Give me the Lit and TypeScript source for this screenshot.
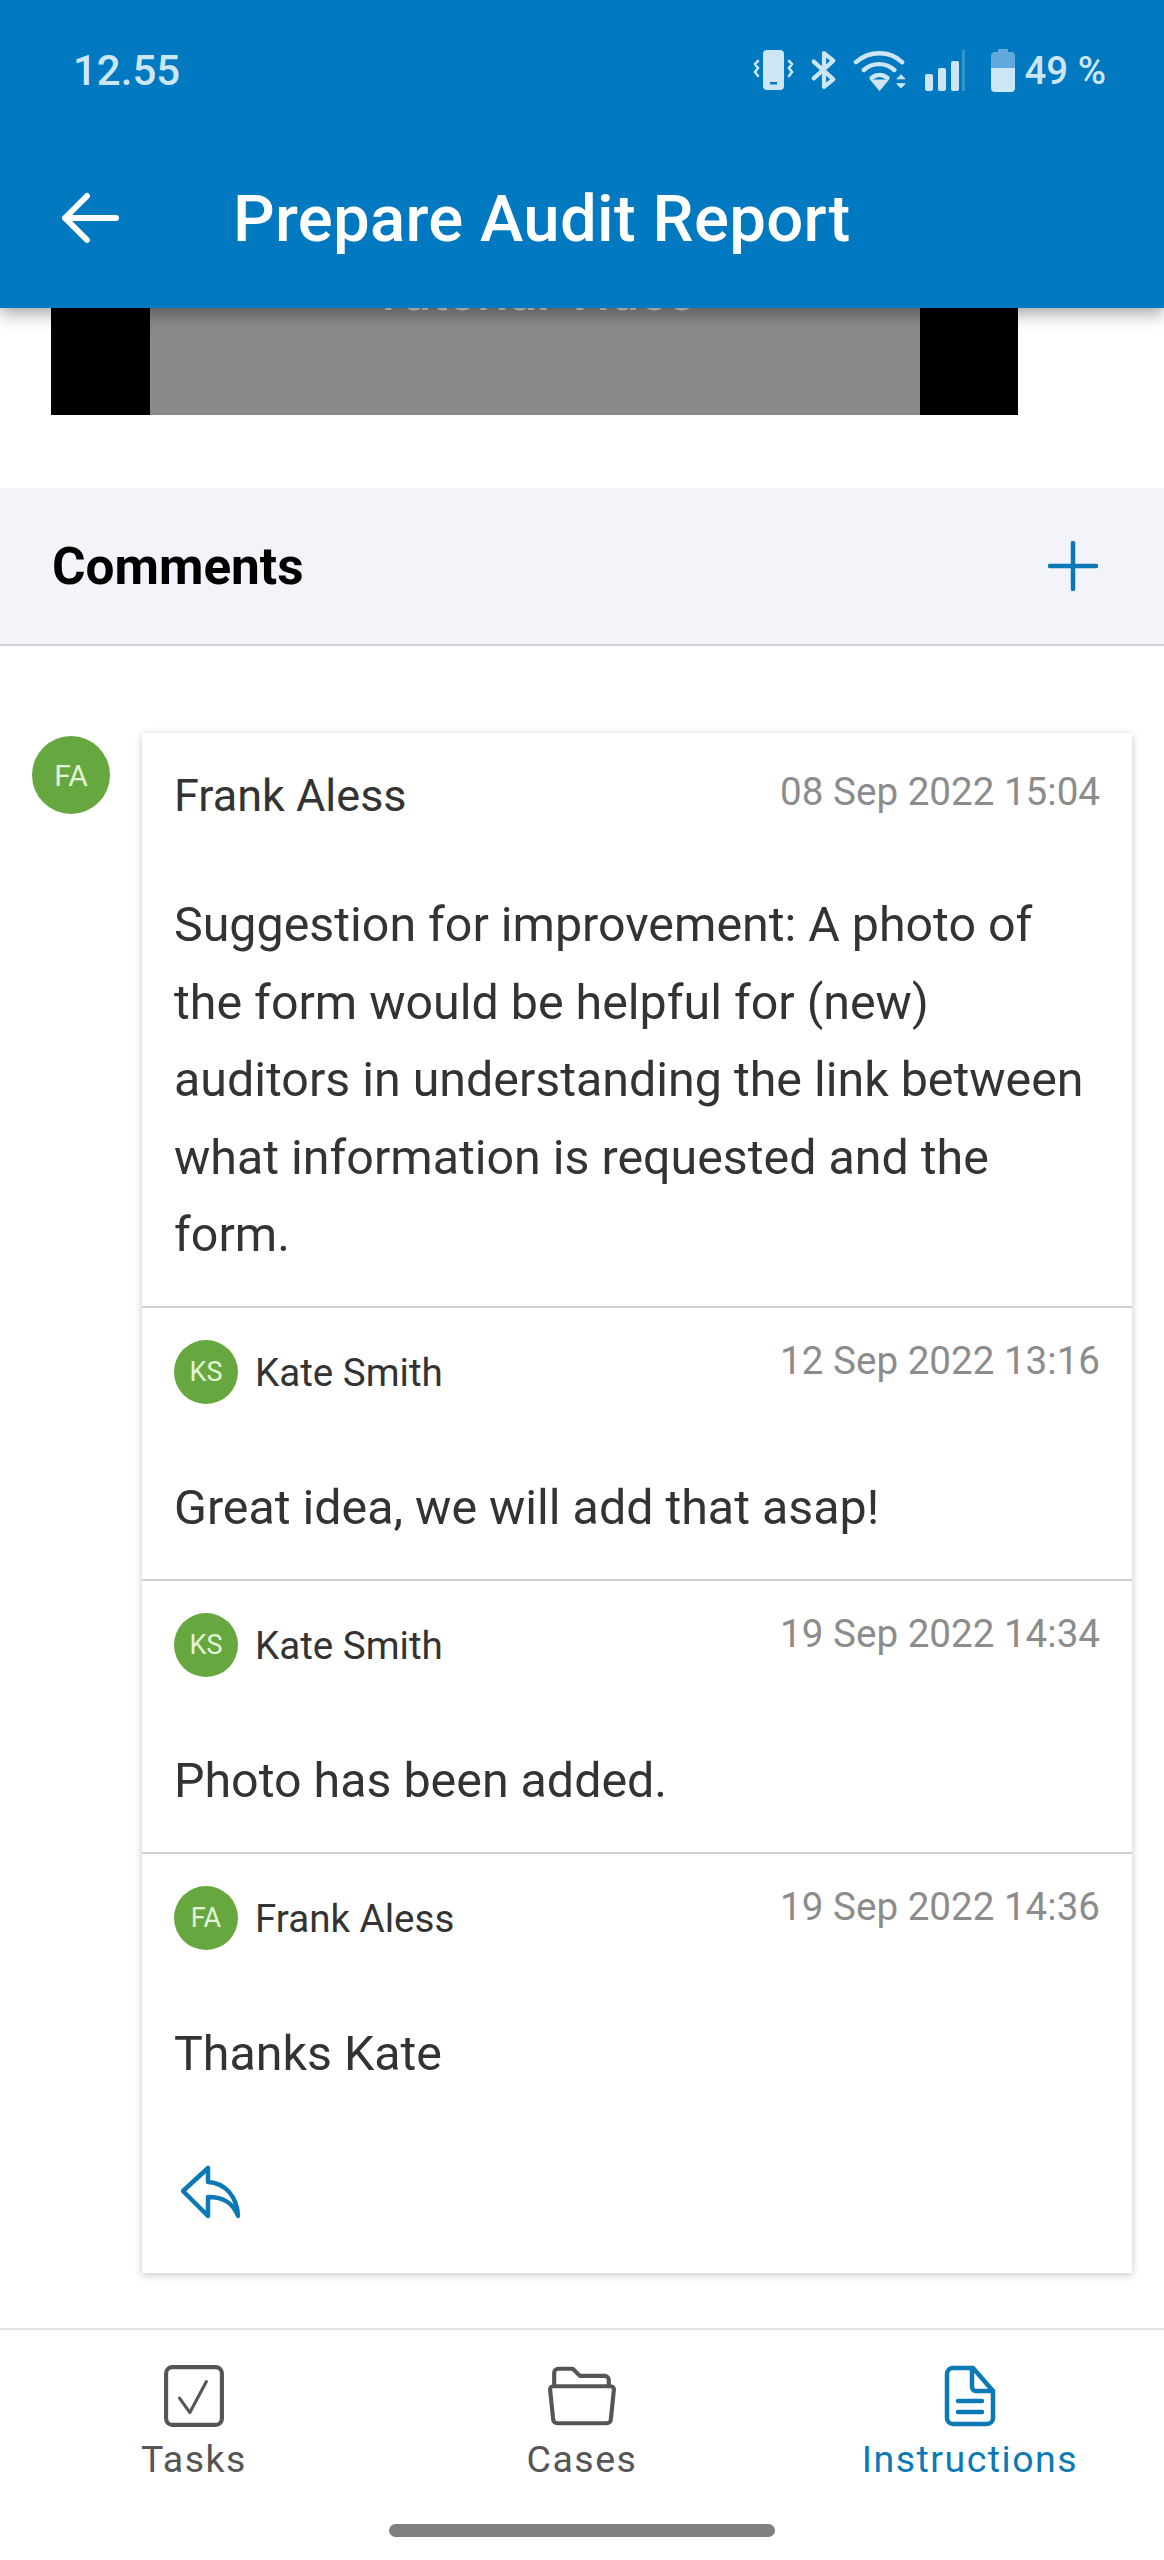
import { LitElement, html, css } from 'lit';
import { customElement } from 'lit/decorators.js';

const body =
  'Suggestion for improvement: A photo of the form would be helpful for (new) auditors in understanding the link between what information is requested and the form.';

const replies = [
  { ini: 'KS', name: 'Kate Smith', date: '12 Sep 2022 13:16', text: 'Great idea, we will add that asap!' },
  { ini: 'KS', name: 'Kate Smith', date: '19 Sep 2022 14:34', text: 'Photo has been added.' },
  { ini: 'FA', name: 'Frank Aless', date: '19 Sep 2022 14:36', text: 'Thanks Kate' },
];

@customElement('app-root')
export class AppRoot extends LitElement {
  static styles = css`
    :host {
      display: block;
      width: 1164px;
      height: 2560px;
      overflow: hidden;
      position: relative;
      background: #fff;
      font-family: Roboto, sans-serif;
      color: #333;
    }

    header {
      position: relative;
      z-index: 2;
      height: 308px;
      background: #0079c1;
      box-shadow: 0 6px 16px rgba(0, 0, 0, 0.35);
    }

    .status {
      display: flex;
      justify-content: space-between;
      align-items: center;
      height: 70px;
      padding: 35px 58px 0 73px;
      color: #cde6f6;
      font-size: 42px;
      font-weight: 500;
    }

    .status-icons {
      display: flex;
      align-items: center;
      gap: 15px;
    }

    .status-icons span {
      margin-left: -7px;
      font-size: 38.4px;
    }

    .battery {
      margin-left: 9px;
    }

    .toolbar {
      display: flex;
      align-items: center;
      height: 130px;
      padding: 48px 0 0 60px;
      color: #fff;
    }

    .toolbar h1 {
      margin: 0 0 0 113px;
      font-size: 65.3px;
      font-weight: 500;
      letter-spacing: 0.3px;
    }

    .video {
      display: flex;
      justify-content: center;
      width: 967px;
      height: 107px;
      margin-left: 51px;
      background: #000;
    }

    .video div {
      width: 770px;
      overflow: hidden;
      background: #8a8a8a;
      text-align: center;
      color: #d8d8d8;
      font-size: 52px;
      font-weight: 500;
      line-height: 50px;
    }

    .video span {
      display: block;
      margin-top: -40px;
    }

    .band {
      display: flex;
      justify-content: space-between;
      align-items: center;
      height: 156px;
      margin-top: 73px;
      padding: 0 66px 0 52px;
      background: #f3f3fa;
      border-bottom: 2px solid #d6d6d6;
      color: #000;
      font-size: 51.3px;
      font-weight: 700;
    }

    .thread {
      display: flex;
      align-items: flex-start;
      gap: 32px;
      padding: 87px 32px 0;
    }

    .avatar {
      flex: none;
      display: flex;
      align-items: center;
      justify-content: center;
      border-radius: 50%;
      background: #66a83f;
      color: #e4f4d8;
    }

    .avatar.big {
      width: 78px;
      height: 78px;
      margin-top: 3px;
      font-size: 30px;
    }

    .avatar.small {
      width: 64px;
      height: 64px;
      font-size: 27px;
    }

    .card {
      flex: 1;
      background: #fff;
      box-shadow: 0 2px 8px rgba(0, 0, 0, 0.22);
    }

    .post {
      padding: 28px 32px 0;
      height: 273px;
      box-sizing: border-box;
      border-top: 2px solid #cfcfcf;
    }

    .post.first {
      height: 573px;
      border-top: none;
    }

    .post.last {
      height: 421px;
    }

    .meta {
      display: flex;
      justify-content: space-between;
      align-items: center;
      height: 68px;
      font-size: 45px;
    }

    .post:not(.first) .meta {
      font-size: 38.6px;
      height: 72px;
    }

    .who {
      display: flex;
      align-items: center;
      gap: 17px;
    }

    .date {
      align-self: flex-start;
      margin-top: 9px;
      color: #8c8c8c;
      font-size: 38.6px;
      line-height: 44px;
    }

    .post:not(.first) .date {
      margin-top: 5px;
      line-height: 40px;
    }

    p {
      margin: 0;
      font-size: 48.35px;
      line-height: 77.5px;
    }

    .post.first p {
      margin-top: 57px;
    }

    .post:not(.first) p {
      margin-top: 75px;
      line-height: 50px;
    }

    .reply {
      display: block;
      margin-top: 86px;
      margin-left: 7px;
    }

    nav {
      position: absolute;
      left: 0;
      right: 0;
      bottom: 0;
      height: 232px;
      box-sizing: border-box;
      border-top: 2px solid #e6e6e6;
      background: #fff;
      display: grid;
      grid-template-columns: repeat(3, 388px);
    }

    nav a {
      display: flex;
      flex-direction: column;
      align-items: center;
      padding-top: 35px;
      color: #555;
      font-size: 37.5px;
      letter-spacing: 1.5px;
    }

    nav a svg {
      flex: none;
      height: 62px;
      margin-bottom: 10px;
    }

    nav a.on {
      color: #0b79b5;
    }

    .home {
      position: absolute;
      left: 389px;
      bottom: 23px;
      width: 386px;
      height: 13px;
      border-radius: 7px;
      background: #808080;
    }
  `;

  render() {
    return html`
      <header>
        <div class="status">
          <span>12.55</span>
          <div class="status-icons">
            <svg width="42" height="44" viewBox="0 0 42 44" fill="none" stroke="currentColor" stroke-width="2.5" stroke-linecap="round">
              <rect x="10" y="2" width="21" height="40" rx="4" fill="currentColor" stroke="none"></rect>
              <rect x="17" y="34" width="7" height="2.5" fill="#0079c1" stroke="none"></rect>
              <path d="M5 13l-3 3 3 4-3 4 3 4M36 13l3 3-3 4 3 4-3 4"></path>
            </svg>
            <svg width="28" height="42" viewBox="0 0 30 42" fill="none" stroke="currentColor" stroke-width="4.5" stroke-linejoin="round" stroke-linecap="round">
              <path d="M4 12l21 19-10 8V3l10 8L4 30"></path>
            </svg>
            <svg width="57" height="42" viewBox="0 0 58 42" fill="none" stroke="currentColor" stroke-width="4.5" stroke-linecap="round">
              <path d="M3 13C17 1 37 1 50 13M11 21c9-8 22-8 31 0M19 29c5-4 11-4 16 0"></path>
              <path d="M22 33h10l-5 6z" fill="currentColor"></path>
              <path d="M49 26l4 4h-8zM49 39l4-4h-8z" fill="currentColor" stroke-width="1"></path>
            </svg>
            <svg width="40" height="44" viewBox="0 0 40 44" fill="currentColor">
              <rect x="0" y="26" width="8" height="17" rx="2"></rect>
              <rect x="13" y="20" width="8" height="23" rx="2"></rect>
              <rect x="26" y="13" width="8" height="30" rx="2"></rect>
              <rect x="37" y="2" width="3" height="41" opacity=".25"></rect>
            </svg>
            <svg class="battery" width="28" height="44" viewBox="0 0 28 44">
              <path d="M9 1h10v3h3a4 4 0 0 1 4 4v12H2V8a4 4 0 0 1 4-4h3z" fill="#5fa9dc"></path>
              <path d="M2 20h24v20a4 4 0 0 1-4 4H6a4 4 0 0 1-4-4z" fill="currentColor"></path>
            </svg>
            <span>49 %</span>
          </div>
        </div>
        <div class="toolbar">
          <svg width="60" height="52" viewBox="0 0 60 52" fill="none" stroke="#fff" stroke-width="6" stroke-linecap="round" stroke-linejoin="round">
            <path d="M56 26H5M27 4L5 26l22 22"></path>
          </svg>
          <h1>Prepare Audit Report</h1>
        </div>
      </header>

      <div class="video"><div><span>Tutorial Video</span></div></div>

      <div class="band">
        <span>Comments</span>
        <svg width="50" height="50" viewBox="0 0 50 50" stroke="#0b79b5" stroke-width="4.5" stroke-linecap="round">
          <path d="M25 2v46M2 25h46"></path>
        </svg>
      </div>

      <div class="thread">
        <div class="avatar big">FA</div>
        <div class="card">
          <div class="post first">
            <div class="meta">
              <span>Frank Aless</span>
              <span class="date">08 Sep 2022 15:04</span>
            </div>
            <p>${body}</p>
          </div>
          ${replies.map(
            (r, i) => html`
              <div class="post ${i === replies.length - 1 ? 'last' : ''}">
                <div class="meta">
                  <span class="who"><span class="avatar small">${r.ini}</span>${r.name}</span>
                  <span class="date">${r.date}</span>
                </div>
                <p>${r.text}</p>
                ${i === replies.length - 1
                  ? html`<svg class="reply" width="60" height="54" viewBox="0 0 60 54" fill="none" stroke="#0b79b5" stroke-width="4.5" stroke-linejoin="round" stroke-linecap="round">
                      <path d="M2 26L27 3v14c17 1 29 14 30 34-5-13-14-19-30-19v19z"></path>
                    </svg>`
                  : ''}
              </div>
            `
          )}
        </div>
      </div>

      <nav>
        <a>
          <svg width="60" viewBox="1 1 58 60" fill="none" stroke="#555" stroke-width="4" stroke-linejoin="round" stroke-linecap="round">
            <rect x="3" y="3" width="54" height="56" rx="6"></rect>
            <path d="M16 33l10 14 16-30" stroke-width="3"></path>
          </svg>
          Tasks
        </a>
        <a>
          <svg width="68" viewBox="1 3 66 57" fill="none" stroke="#555" stroke-width="4" stroke-linejoin="round" stroke-linecap="round">
            <path d="M7 20V9a4 4 0 0 1 4-4h14l7 7h24a4 4 0 0 1 4 4v6"></path>
            <path d="M3 25a3 3 0 0 1 3-3h56a3 3 0 0 1 3 3l-3 29a4 4 0 0 1-4 4H10a4 4 0 0 1-4-4z"></path>
          </svg>
          Cases
        </a>
        <a class="on">
          <svg width="52" viewBox="0 0 52 62" fill="none" stroke="#0b79b5" stroke-width="4.5" stroke-linejoin="round" stroke-linecap="round">
            <path d="M8 3h21l20 23v27a6 6 0 0 1-6 6H9a6 6 0 0 1-6-6V9a6 6 0 0 1 5-6z"></path>
            <path d="M28 3v19a4 4 0 0 0 4 4h17M14 36h24M14 47h24"></path>
          </svg>
          Instructions
        </a>
        <div class="home"></div>
      </nav>
    `;
  }
}
